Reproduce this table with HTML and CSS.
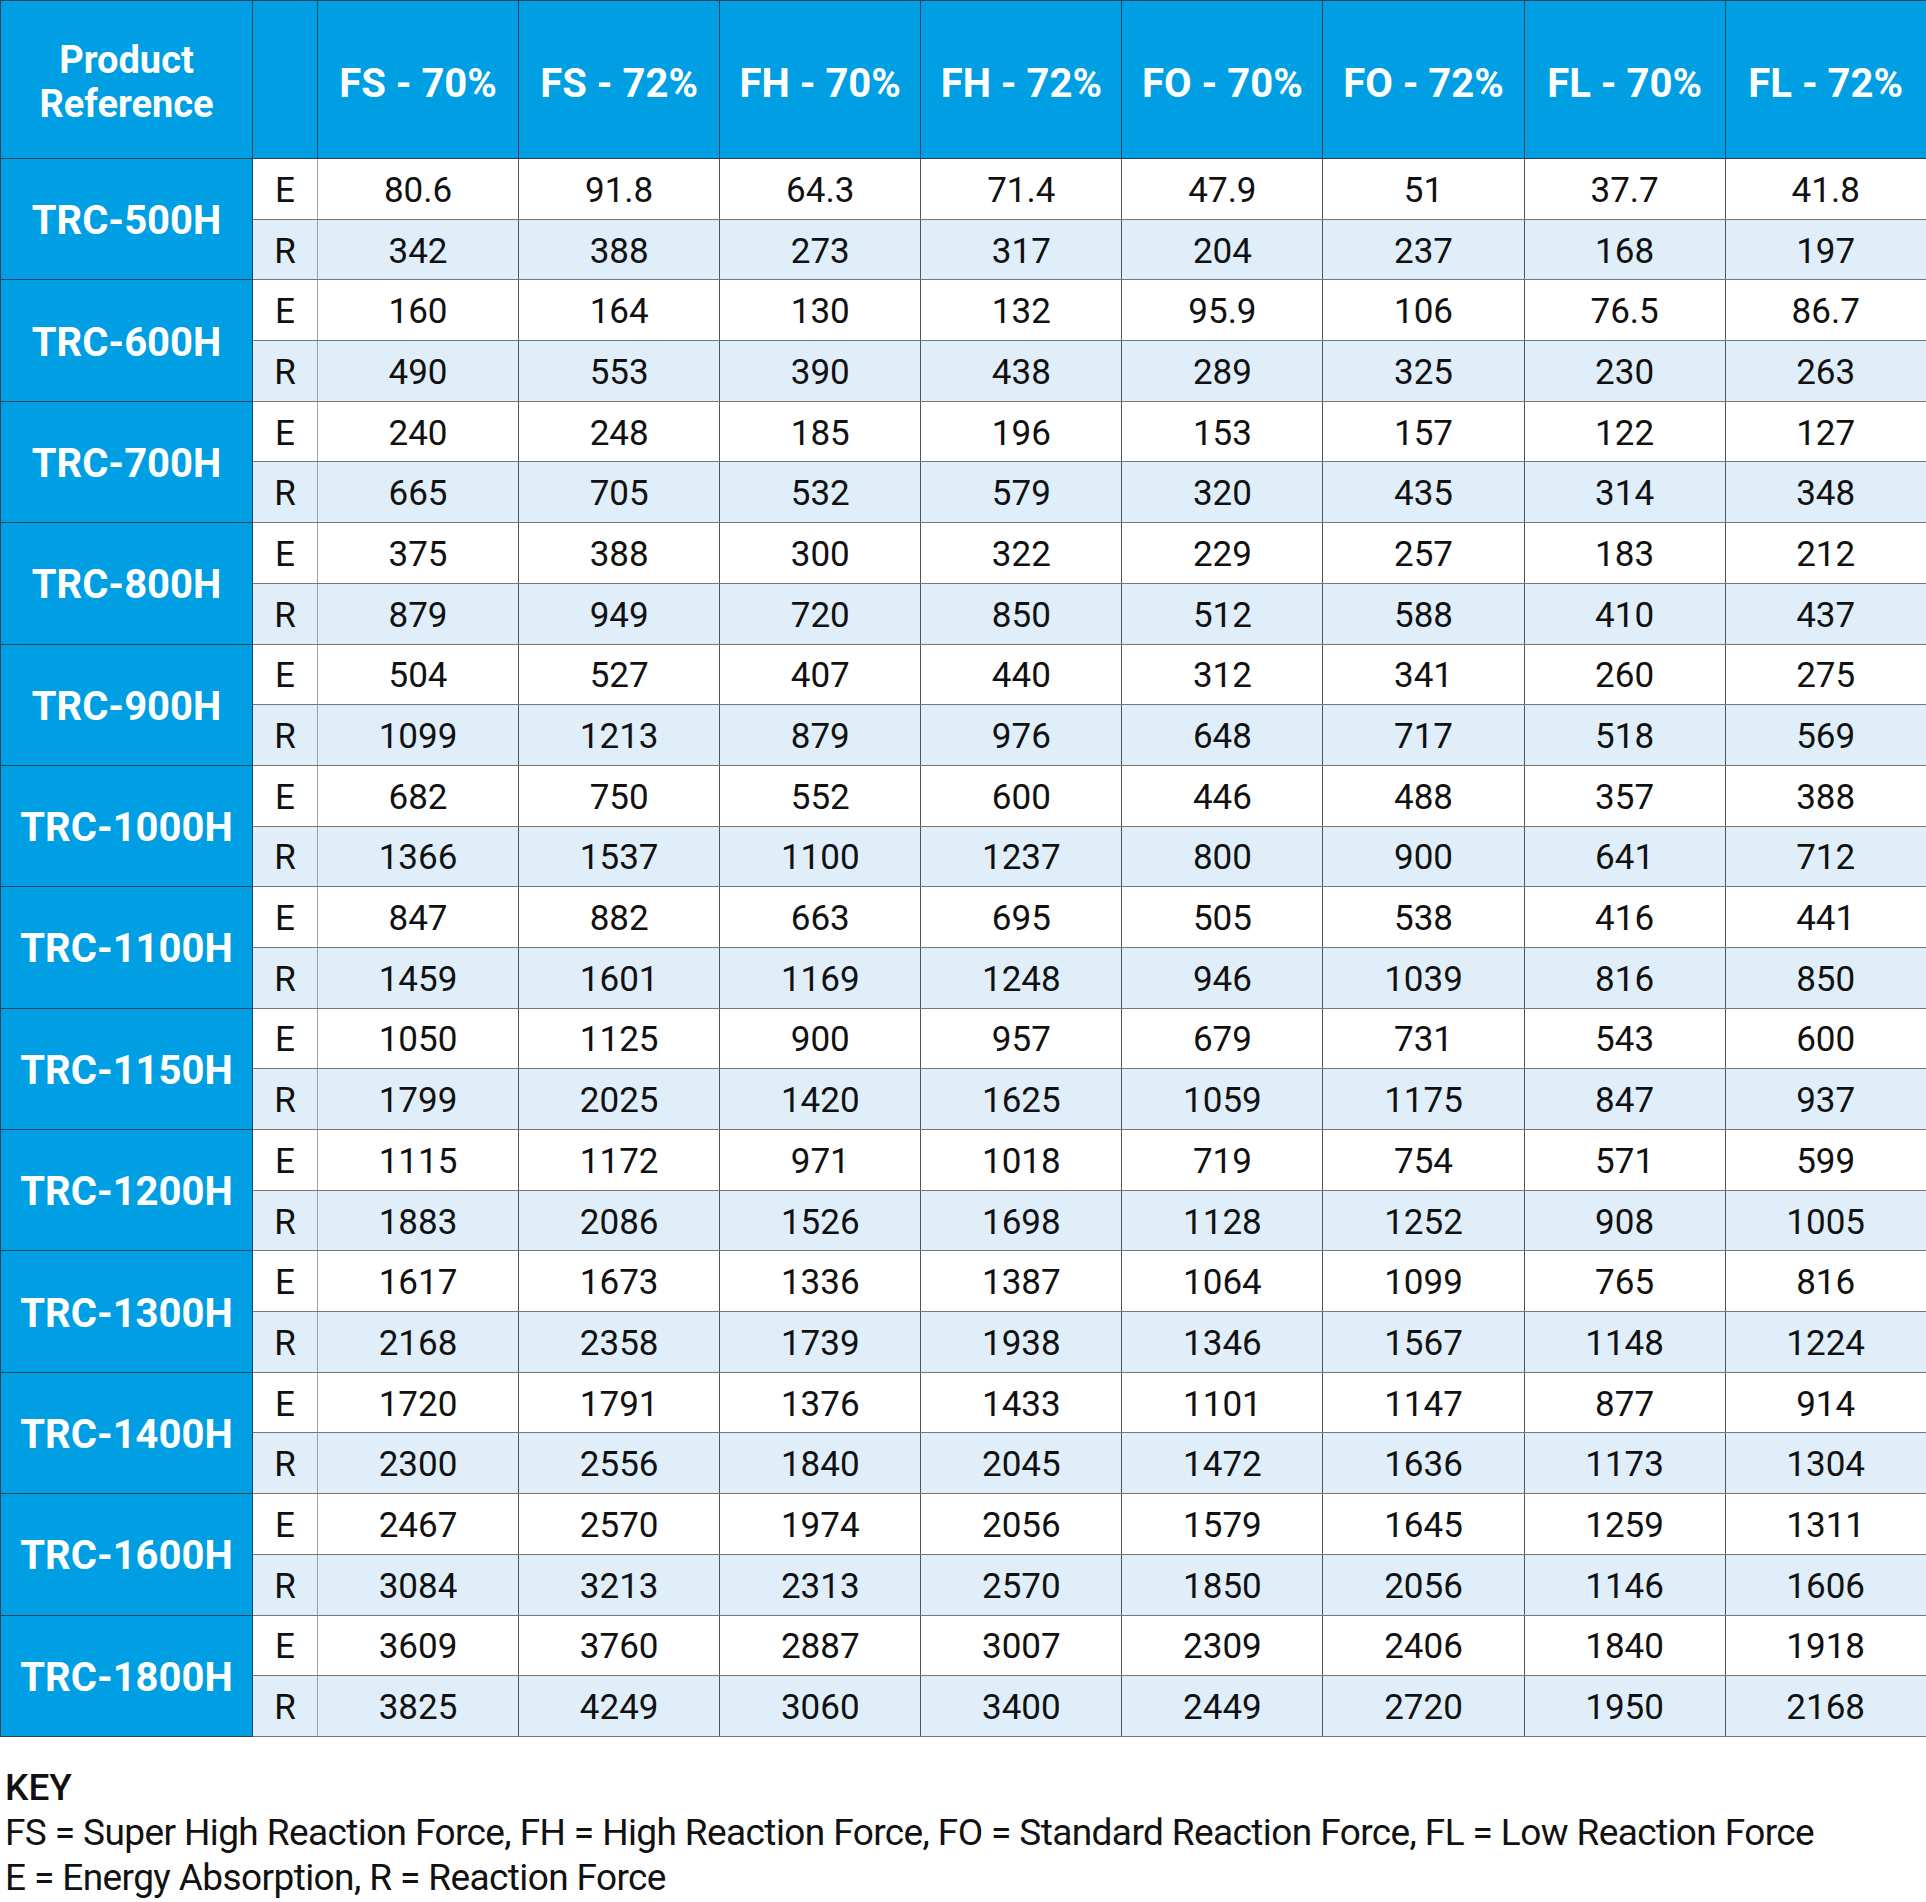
FILE: index.html
```html
<!DOCTYPE html>
<html>
<head>
<meta charset="utf-8">
<link rel="stylesheet" href="styles.css">
</head>
<body>
<table class="spec">
<colgroup>
<col class="c-prod"><col class="c-type">
<col class="c-val"><col class="c-val"><col class="c-val"><col class="c-val">
<col class="c-val"><col class="c-val"><col class="c-val"><col class="c-val">
</colgroup>
<thead>
<tr>
<th class="h-prod">Product<br>Reference</th>
<th class="h-type"></th>
<th>FS - 70%</th><th>FS - 72%</th><th>FH - 70%</th><th>FH - 72%</th>
<th>FO - 70%</th><th>FO - 72%</th><th>FL - 70%</th><th>FL - 72%</th>
</tr>
</thead>
<tbody id="body">
<tr class="e"><th rowspan="2" class="prod">TRC-500H</th><td class="t">E</td><td>80.6</td><td>91.8</td><td>64.3</td><td>71.4</td><td>47.9</td><td>51</td><td>37.7</td><td>41.8</td></tr>
<tr class="r"><td class="t">R</td><td>342</td><td>388</td><td>273</td><td>317</td><td>204</td><td>237</td><td>168</td><td>197</td></tr>
<tr class="e"><th rowspan="2" class="prod">TRC-600H</th><td class="t">E</td><td>160</td><td>164</td><td>130</td><td>132</td><td>95.9</td><td>106</td><td>76.5</td><td>86.7</td></tr>
<tr class="r"><td class="t">R</td><td>490</td><td>553</td><td>390</td><td>438</td><td>289</td><td>325</td><td>230</td><td>263</td></tr>
<tr class="e"><th rowspan="2" class="prod">TRC-700H</th><td class="t">E</td><td>240</td><td>248</td><td>185</td><td>196</td><td>153</td><td>157</td><td>122</td><td>127</td></tr>
<tr class="r"><td class="t">R</td><td>665</td><td>705</td><td>532</td><td>579</td><td>320</td><td>435</td><td>314</td><td>348</td></tr>
<tr class="e"><th rowspan="2" class="prod">TRC-800H</th><td class="t">E</td><td>375</td><td>388</td><td>300</td><td>322</td><td>229</td><td>257</td><td>183</td><td>212</td></tr>
<tr class="r"><td class="t">R</td><td>879</td><td>949</td><td>720</td><td>850</td><td>512</td><td>588</td><td>410</td><td>437</td></tr>
<tr class="e"><th rowspan="2" class="prod">TRC-900H</th><td class="t">E</td><td>504</td><td>527</td><td>407</td><td>440</td><td>312</td><td>341</td><td>260</td><td>275</td></tr>
<tr class="r"><td class="t">R</td><td>1099</td><td>1213</td><td>879</td><td>976</td><td>648</td><td>717</td><td>518</td><td>569</td></tr>
<tr class="e"><th rowspan="2" class="prod">TRC-1000H</th><td class="t">E</td><td>682</td><td>750</td><td>552</td><td>600</td><td>446</td><td>488</td><td>357</td><td>388</td></tr>
<tr class="r"><td class="t">R</td><td>1366</td><td>1537</td><td>1100</td><td>1237</td><td>800</td><td>900</td><td>641</td><td>712</td></tr>
<tr class="e"><th rowspan="2" class="prod">TRC-1100H</th><td class="t">E</td><td>847</td><td>882</td><td>663</td><td>695</td><td>505</td><td>538</td><td>416</td><td>441</td></tr>
<tr class="r"><td class="t">R</td><td>1459</td><td>1601</td><td>1169</td><td>1248</td><td>946</td><td>1039</td><td>816</td><td>850</td></tr>
<tr class="e"><th rowspan="2" class="prod">TRC-1150H</th><td class="t">E</td><td>1050</td><td>1125</td><td>900</td><td>957</td><td>679</td><td>731</td><td>543</td><td>600</td></tr>
<tr class="r"><td class="t">R</td><td>1799</td><td>2025</td><td>1420</td><td>1625</td><td>1059</td><td>1175</td><td>847</td><td>937</td></tr>
<tr class="e"><th rowspan="2" class="prod">TRC-1200H</th><td class="t">E</td><td>1115</td><td>1172</td><td>971</td><td>1018</td><td>719</td><td>754</td><td>571</td><td>599</td></tr>
<tr class="r"><td class="t">R</td><td>1883</td><td>2086</td><td>1526</td><td>1698</td><td>1128</td><td>1252</td><td>908</td><td>1005</td></tr>
<tr class="e"><th rowspan="2" class="prod">TRC-1300H</th><td class="t">E</td><td>1617</td><td>1673</td><td>1336</td><td>1387</td><td>1064</td><td>1099</td><td>765</td><td>816</td></tr>
<tr class="r"><td class="t">R</td><td>2168</td><td>2358</td><td>1739</td><td>1938</td><td>1346</td><td>1567</td><td>1148</td><td>1224</td></tr>
<tr class="e"><th rowspan="2" class="prod">TRC-1400H</th><td class="t">E</td><td>1720</td><td>1791</td><td>1376</td><td>1433</td><td>1101</td><td>1147</td><td>877</td><td>914</td></tr>
<tr class="r"><td class="t">R</td><td>2300</td><td>2556</td><td>1840</td><td>2045</td><td>1472</td><td>1636</td><td>1173</td><td>1304</td></tr>
<tr class="e"><th rowspan="2" class="prod">TRC-1600H</th><td class="t">E</td><td>2467</td><td>2570</td><td>1974</td><td>2056</td><td>1579</td><td>1645</td><td>1259</td><td>1311</td></tr>
<tr class="r"><td class="t">R</td><td>3084</td><td>3213</td><td>2313</td><td>2570</td><td>1850</td><td>2056</td><td>1146</td><td>1606</td></tr>
<tr class="e"><th rowspan="2" class="prod">TRC-1800H</th><td class="t">E</td><td>3609</td><td>3760</td><td>2887</td><td>3007</td><td>2309</td><td>2406</td><td>1840</td><td>1918</td></tr>
<tr class="r"><td class="t">R</td><td>3825</td><td>4249</td><td>3060</td><td>3400</td><td>2449</td><td>2720</td><td>1950</td><td>2168</td></tr>
</tbody>
</table>
<div class="key">
<div class="key-title">KEY</div>
<div class="key-line">FS = Super High Reaction Force, FH = High Reaction Force, FO = Standard Reaction Force, FL = Low Reaction Force</div>
<div class="key-line">E = Energy Absorption, R = Reaction Force</div>
</div>
</body>
</html>
```

FILE: styles.css
```css
html, body {
  margin: 0;
  padding: 0;
  background: #ffffff;
}
body {
  font-family: Roboto, "Liberation Sans", sans-serif;
  color: #111111;
}
.spec {
  border-collapse: collapse;
  table-layout: fixed;
  width: 1926px;
  border: 1px solid #1d3446;
}
.c-prod { width: 252px; }
.c-type { width: 65px; }
.c-val { width: 201.1px; }

thead tr {
  height: 158px;
}
thead th {
  background: #009fe3;
  color: #ffffff;
  font-weight: 700;
  font-size: 40px;
  padding: 8px 0 0 0;
  text-align: center;
  vertical-align: middle;
  border: 1px solid #24445a;
  line-height: 44px;
}
thead th.h-prod {
  font-size: 38px;
  padding-top: 5px;
}
tbody tr {
  height: 60.7px;
}
tbody th.prod {
  background: #009fe3;
  color: #ffffff;
  font-weight: 700;
  font-size: 40px;
  text-align: center;
  vertical-align: middle;
  border: 1px solid #24445a;
  padding: 4px 0 0 0;
  line-height: 44px;
}
tbody td {
  padding: 4px 0 0 0;
  text-align: center;
  vertical-align: middle;
  font-size: 35px;
  font-weight: 400;
  border-left: 1px solid #555555;
  border-right: 1px solid #555555;
  border-top: 1px solid #777777;
  border-bottom: 1px solid #777777;
  line-height: 40px;
}
tbody td.t {
  border-left: 1px solid #24445a;
  border-right: 1px solid #a0a0a0;
}
tbody tr.r td {
  background: #e0eef9;
}
tbody tr.e td {
  background: #ffffff;
}
.key {
  padding: 28px 0 0 5px;
}
.key-title {
  font-size: 37px;
  font-weight: 500;
  line-height: 45px;
}
.key-line {
  font-size: 37px;
  font-weight: 400;
  line-height: 45px;
  letter-spacing: -0.6px;
  white-space: nowrap;
}
```
